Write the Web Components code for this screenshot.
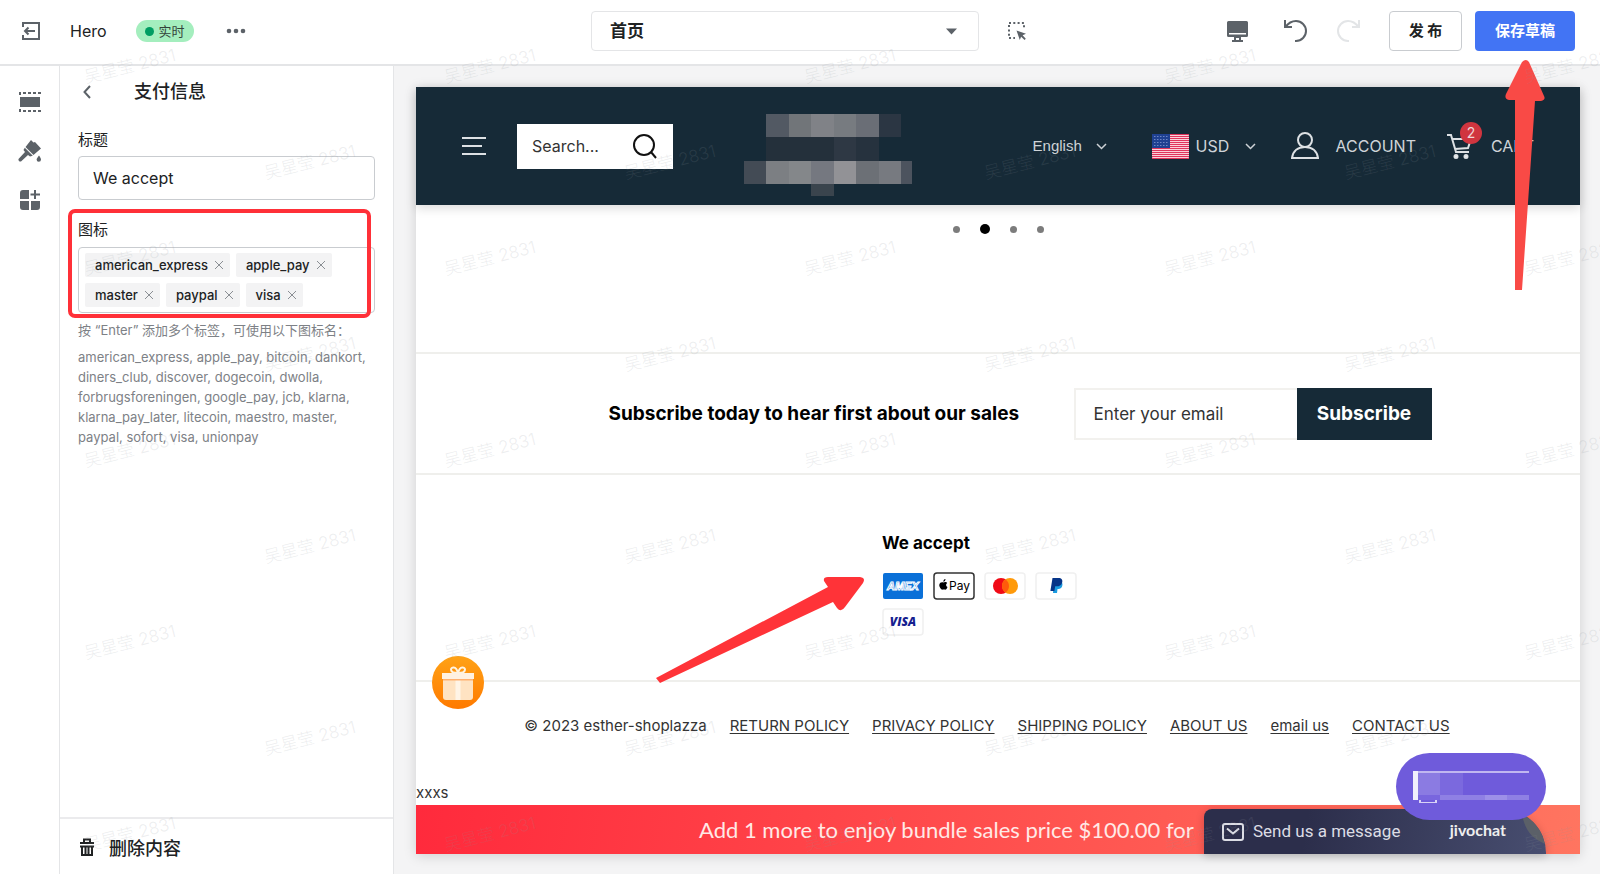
<!DOCTYPE html>
<html lang="zh-CN">
<head>
<meta charset="utf-8">
<title>Theme editor</title>
<style>
  html, body { margin: 0; }
  body {
    font-family: Inter, "Noto Sans CJK SC", sans-serif;
    color: #202223; background: #fff;
    min-height: 100vh; display: flex; flex-direction: column;
    position: relative; overflow: hidden;
  }
  main { flex: 1; display: flex; }
</style>
</head>
<body>
<editor-topbar></editor-topbar>
<main>
  <editor-rail></editor-rail>
  <settings-panel></settings-panel>
  <preview-stage>
    <store-header></store-header>
    <slide-dots></slide-dots>
    <subscribe-band></subscribe-band>
    <payment-methods></payment-methods>
    <store-footer></store-footer>
    <promo-bar></promo-bar>
  </preview-stage>
</main>
<save-arrow></save-arrow>
<water-mark></water-mark>

<script>
const base = `*,:host{box-sizing:border-box}button,input,select{font:inherit;color:inherit;margin:0;border:0;padding:0;background:none;outline:0}
button{cursor:pointer;display:flex;align-items:center;justify-content:center}svg{display:block;flex:none}select{appearance:none}`;
function define(name, css, html) {
  const t = document.createElement('template');
  t.innerHTML = `<style>${base}${css}</style>${html}`;
  customElements.define(name, class extends HTMLElement {
    constructor() {
      super();
      this.attachShadow({ mode: 'open' }).append(t.content.cloneNode(true));
    }
  });
}

/* ---------- top bar ---------- */
define('editor-topbar', `
:host{display:grid;grid-template-columns:591fr 388px 621fr;align-items:center;height:66px;padding-bottom:2px;border-bottom:2px solid #e4e5e7;background:#fff}
.left{display:flex;align-items:center;padding-left:22px}
.name{font-size:16px;line-height:24px;margin-left:30px}
.live{display:flex;align-items:center;gap:5px;height:22px;padding:0 9px;margin-left:29px;border-radius:11px;background:#a4eebe;font-size:13px;line-height:22px;color:#33443a}
.live i{width:9px;height:9px;border-radius:50%;background:#009d62}
.more{margin-left:32px}
.pick{position:relative}
select{display:block;width:100%;height:40px;border:1px solid #e4e5e7;border-radius:4px;padding:0 18px;font-size:17px;font-weight:700;background:#fff}
.pick svg{position:absolute;right:22px;top:17px;pointer-events:none}
.right{display:flex;align-items:center;padding:0 25px 0 29px}
.right .desk{margin-left:auto}
.undo{margin-left:35px}.redo{margin-left:30px}
.pub,.save{height:40px;border-radius:4px;font-size:15px;line-height:20px;font-weight:700}
.pub{width:73px;margin-left:28px;border:1px solid #c9ccd0;white-space:pre}
.save{width:100px;margin-left:13px;background:#4274f4;color:#fff}`, `
<div class="left">
  <button aria-label="Exit"><svg width="18" height="18" viewBox="0 0 18 18" fill="none" stroke="#5c6268" stroke-width="2"><path d="M1 5V1h16v16H1v-4M13 9H3M6.500 5.500 3 9l3.500 3.500"/></svg></button>
  <span class="name">Hero</span>
  <span class="live"><i></i>实时</span>
  <button class="more" aria-label="More"><svg width="20" height="6" fill="#5c6268"><circle cx="3" cy="3" r="2.300"/><circle cx="10" cy="3" r="2.300"/><circle cx="17" cy="3" r="2.300"/></svg></button>
</div>
<div class="pick"><select aria-label="Page"><option>首页</option></select><svg width="11" height="7"><path d="M0 0.500h11L5.500 6.500z" fill="#5c6268"/></svg></div>
<div class="right">
  <button aria-label="Inspect"><svg width="19" height="19" viewBox="0 0 19 19"><path d="M1 1h15v15H1z" fill="none" stroke="#5c6268" stroke-width="2" stroke-dasharray="2 2.300"/><path d="M7 7h12v12H7z" fill="#fff"/><path d="m8.500 8.500 9.500 3.300-3.400 1.400 3.200 3.600-1.200 1.200-3.500-3.300-1.300 3.300z" fill="#5c6268"/></svg></button>
  <button class="desk" aria-label="Desktop"><svg width="21" height="21" viewBox="0 0 21 21" fill="#5c6268"><path d="M1.500 0h18A1.500 1.500 0 0 1 21 1.500v13a1.500 1.500 0 0 1-1.500 1.500h-18A1.500 1.500 0 0 1 0 14.500v-13A1.500 1.500 0 0 1 1.500 0zM7 16h7v3h2v2H5v-2h2z"/><path d="M2 12h17v1.500H2z" fill="#fff"/><path d="M9 17h3v2H9z" fill="#fff"/></svg></button>
  <button class="undo" aria-label="Undo"><svg width="24" height="24" viewBox="0 0 24 24" fill="none" stroke="#5c6268" stroke-width="2"><path d="M2 1v7h7M2.500 8C5 4.500 8.500 2 13 2a10 10 0 0 1 0 20h-1"/></svg></button>
  <button class="redo" aria-label="Redo" disabled><svg width="24" height="24" viewBox="0 0 24 24" fill="none" stroke="#e3e5e7" stroke-width="2"><path d="M22 1v7h-7M21.500 8C19 4.500 15.500 2 11 2a10 10 0 0 0 0 20h1"/></svg></button>
  <button class="pub">发 布</button>
  <button class="save">保存草稿</button>
</div>`);

/* ---------- icon rail ---------- */
define('editor-rail', `
:host{display:flex;flex-direction:column;align-items:center;gap:26px;width:60px;flex:none;padding-top:25px;border-right:1px solid #e4e5e7}`, `
<button aria-label="Sections"><svg width="22" height="22" viewBox="0 0 22 22" fill="#5c6268"><path d="M1 6h20v10H1z"/><path d="M1 4V2h20v2M1 18v2h20v-2" fill="none" stroke="#5c6268" stroke-width="2" stroke-dasharray="3 2"/></svg></button>
<button aria-label="Theme"><svg width="24" height="24" viewBox="0 0 24 24" fill="#5c6268"><path d="m13 1 2.500 2.500L17 3l6 6.500-7.500 6.500L7.500 8zM6.800 8.800l8 8L12 17.500l-2-1.500-7 6.500a2 2 0 0 1-2.500-2.500L7 13l-1.500-2zM21 16.500c1.400 2 2 3 2 4a2.200 2.200 0 0 1-4.400 0c0-1 1-2 2.400-4z"/></svg></button>
<button aria-label="Apps"><svg width="22" height="22" viewBox="0 0 22 22" fill="#5c6268"><path d="M4 1h6v9H1V4a3 3 0 0 1 3-3zM1 12h9v9H4a3 3 0 0 1-3-3zM12 12h9v6a3 3 0 0 1-3 3h-6zM15 1h2v3.500h4v2h-4V10h-2V6.500h-3.500v-2H15z"/></svg></button>`);

/* ---------- settings panel ---------- */
define('tag-chip', `
:host{display:flex;align-items:center;gap:7px;height:24px;padding:0 7px 0 10px;background:#f3f3f4;border-radius:2px;font-size:13px;font-weight:500;line-height:24px}`, `
<span><slot></slot></span><button aria-label="Remove"><svg width="8" height="8" stroke="#8a8e93" fill="none"><path d="m0 0 8 8M8 0 0 8"/></svg></button>`);

define('settings-panel', `
:host{display:flex;flex-direction:column;width:334px;flex:none;border-right:1px solid #e4e5e7}
.body{flex:1;padding:10px 18px 0}
header{display:flex;align-items:center;gap:43px;height:32px;padding-left:5px}
h2{margin:0;font-size:18px;line-height:32px;font-weight:500}
label,.label{display:block;font-size:15px;line-height:24px}
.one{margin-top:20px}
.one input{display:block;width:297px;height:44px;margin-top:4px;border:1px solid #c9ccd0;border-radius:4px;padding:0 14px;font-size:16px}
.two{position:relative;margin-top:18px}
.tags{display:flex;flex-wrap:wrap;align-content:center;gap:6px;width:297px;height:66px;margin-top:5px;padding:0 6px;border:1px solid #c9ccd0;border-radius:4px}
.mark{position:absolute;left:-10px;top:-9px;width:303px;height:109px;border:4px solid #ff3038;border-radius:7px;pointer-events:none}
p{margin:0;color:#7d8186;font-size:13px;line-height:20px;white-space:nowrap}
.hint{margin-top:7px;margin-bottom:7px}
.foot{display:flex;align-items:center;height:57px;padding:0 20px;border-top:2px solid #ebebed}
.foot button{gap:15px;font-size:18px;font-weight:500}`, `
<div class="body">
  <header><button aria-label="Back"><svg width="8" height="14" fill="none" stroke="#5c6268" stroke-width="2"><path d="M7 1 1.500 7 7 13"/></svg></button><h2>支付信息</h2></header>
  <div class="one"><label for="t">标题</label><input id="t" value="We accept"></div>
  <div class="two">
    <div class="label">图标</div>
    <div class="tags"><tag-chip>american_express</tag-chip><tag-chip>apple_pay</tag-chip><tag-chip>master</tag-chip><tag-chip>paypal</tag-chip><tag-chip>visa</tag-chip></div>
    <div class="mark"></div>
  </div>
  <p class="hint">按 “Enter” 添加多个标签，可使用以下图标名：</p>
  <p>american_express, apple_pay, bitcoin, dankort,<br>diners_club, discover, dogecoin, dwolla,<br>forbrugsforeningen, google_pay, jcb, klarna,<br>klarna_pay_later, litecoin, maestro, master,<br>paypal, sofort, visa, unionpay</p>
</div>
<div class="foot"><button><svg width="14" height="18" viewBox="0 0 14 18" fill="none" stroke="#202223" stroke-width="2"><path d="M0 5h14M4 4V1.500h6V4M0 8.500h14M2 9v8h10V9M5.500 9v8M8.500 9v8" /></svg>删除内容</button></div>`);

/* ---------- preview ---------- */
define('preview-stage', `
:host{display:flex;flex:1;min-width:0;padding:21px 20px 20px 22px;background:#f4f4f5}
section{position:relative;display:flex;flex-direction:column;flex:1;min-width:0;background:#fff;box-shadow:0 2px 12px rgba(0,0,0,.15)}
.gift{position:absolute;left:16px;bottom:145px;width:52px;height:53px;border-radius:50%;background:linear-gradient(#ffa216,#ff7a00)}`, `
<section><slot></slot>
<button class="gift" aria-label="Rewards"><svg width="34" height="36" viewBox="0 0 34 36"><path d="M17 8C12 8 10 6.500 10 4.500S15 0 17 8c2-8 7-5.500 7-3.500S22 8 17 8z" fill="none" stroke="#fff3e0" stroke-width="2"/><path d="M2 15h30v17a3 3 0 0 1-3 3H5a3 3 0 0 1-3-3z" fill="#ffe3c2"/><path d="M14.500 15h5v20h-5z" fill="#fff4e6"/><path d="M1 8h32v6H1z" fill="#fff1e2"/><path d="M2 14h30v1.500H2z" fill="#ffb070"/></svg></button>
</section>`);

const chev = `<svg width="11" height="7" fill="none" stroke="#cdd2d6" stroke-width="1.500"><path d="m1 1 4.500 4.500L10 1"/></svg>`;
let stripes = '';
for (let i = 0; i < 13; i++) stripes += `<path d="M0 ${i * 2}h37v1H0z" fill="#e0345c"/>`;
let stars = '';
for (let r = 0; r < 4; r++) for (let c = 0; c < 5; c++) stars += `<path d="M${2 + c * 3} ${2 + r * 3}h1.500v1H${2 + c * 3}z" fill="#6f86c4"/>`;

define('store-header', `
:host{display:flex;align-items:center;height:118px;padding:0 46px;background:#162a37;color:#cfd4d8;font-size:16px;box-shadow:0 3px 10px rgba(0,0,0,.15)}
form{display:flex;align-items:center;width:156px;height:45px;margin-left:31px;padding:0 16px 0 15px;background:#fff;color:#222}
input{flex:1;width:0}input::placeholder{color:#333;opacity:1}
.logo{margin-left:71px;margin-top:18px}
.sel{display:flex;align-items:center}
.lang{margin-left:auto;font:15px/20px "Liberation Sans",sans-serif}
.lang select{width:63px}
.cur{margin-left:45px}.cur select{width:49px;margin-left:7px}
a{display:flex;align-items:center;color:inherit;text-decoration:none}
.acc{margin-left:35px;gap:17px}
.cart{position:relative;margin-left:31px;gap:19px}
.badge{position:absolute;left:13px;top:-11px;width:22px;height:22px;border-radius:50%;background:#d0353f;font-size:14px;line-height:22px;text-align:center;color:#f0d6d8}`, `
<button aria-label="Menu"><svg width="24" height="20" fill="#dde1e4"><path d="M0 1h24v2H0zM0 9h20v2H0zM0 17h24v2H0z"/></svg></button>
<form><input type="search" aria-label="Search" placeholder="Search..."><button type="button" aria-label="Search"><svg width="24" height="25" viewBox="0 0 24 25" fill="none" stroke="#111" stroke-width="2"><circle cx="11" cy="11" r="10"/><path d="m18 18 5 6"/></svg></button></form>
<svg class="logo" width="168" height="82" shape-rendering="crispEdges">
<path d="M22 0h23v23H22z" fill="#525963"/><path d="M45 0h22v23H45z" fill="#717579"/><path d="M67 0h23v23H67z" fill="#808287"/><path d="M90 0h22v23H90z" fill="#777b80"/><path d="M112 0h23v23h-23z" fill="#6a6e76"/><path d="M135 0h22v23h-22z" fill="#2b3643"/>
<path d="M22 23h68v24H22z" fill="#24303b"/><path d="M90 23h22v24H90z" fill="#2e3844"/><path d="M112 23h23v24h-23z" fill="#26323e"/>
<path d="M0 47h22v23H0z" fill="#434b55"/><path d="M22 47h23v23H22z" fill="#7c7f83"/><path d="M45 47h22v23H45z" fill="#84878a"/><path d="M67 47h23v23H67z" fill="#757880"/><path d="M90 47h22v23H90z" fill="#929296"/><path d="M112 47h23v23h-23z" fill="#6c7076"/><path d="M135 47h22v23h-22z" fill="#777a80"/><path d="M157 47h11v23h-11z" fill="#4c535e"/><path d="M67 70h23v12H67z" fill="#3a444d"/></svg>
<div class="sel lang"><select aria-label="Language"><option>English</option></select>${chev}</div>
<div class="sel cur"><svg width="37" height="25"><rect width="37" height="25" rx="2" fill="#fbd0d8"/>${stripes}<path d="M0 0h18v14H0z" fill="#1f4191"/>${stars}</svg><select aria-label="Currency"><option>USD</option></select>${chev}</div>
<a class="acc" href="#"><svg width="28" height="28" viewBox="0 0 28 28" fill="none" stroke="#dde1e4" stroke-width="2"><circle cx="14" cy="8" r="7"/><path d="M1 26c1-7 6-11 13-11s12 4 13 11z"/></svg>ACCOUNT</a>
<a class="cart" href="#"><svg width="25" height="26" viewBox="0 0 25 26" fill="none" stroke="#dde1e4" stroke-width="2"><path d="M0 2h4l5 17h13M5.500 6H24l-3 9-13 1"/><circle cx="9" cy="23.500" r="1.500" fill="#fff"/><circle cx="19" cy="23.500" r="1.500" fill="#fff"/></svg><span class="badge">2</span>CART</a>`);

define('slide-dots', `
:host{display:flex;justify-content:center;gap:20px;height:147px;padding-top:19px}
button{width:7px;height:10px}i{width:7px;height:7px;border-radius:50%;background:#7c7c7c}.on{width:10px}.on i{width:10px;height:10px;background:#000}`, `
<button aria-label="Slide 1"><i></i></button><button class="on" aria-label="Slide 2"><i></i></button><button aria-label="Slide 3"><i></i></button><button aria-label="Slide 4"><i></i></button>`);

define('subscribe-band', `
:host{display:flex;align-items:center;justify-content:center;height:123px;padding-left:44px;border-top:2px solid #efefec;border-bottom:2px solid #efefec;color:#000}
label{font-size:19px;font-weight:700;line-height:24px;width:465px}
form{display:flex}
input{width:223px;height:52px;padding:0 18px;border:2px solid #f2f1ee;border-right:0;font-size:17px}
input::placeholder{color:#333;opacity:1}
button{width:135px;height:52px;background:#162a37;color:#fff;font-size:19px;font-weight:700}`, `
<label for="e">Subscribe today to hear first about our sales</label>
<form><input id="e" type="email" placeholder="Enter your email"><button type="button">Subscribe</button></form>`);

define('payment-methods', `
:host{display:flex;justify-content:center;position:relative;height:207px;padding-top:56px;border-bottom:2px solid #efefec;color:#000}
.col{width:232px}
h3{margin:0;font-size:17px;line-height:24px;font-weight:700}
.cards{display:flex;flex-wrap:wrap;gap:8px 9px;margin-top:17px}
.arrow{position:absolute;left:236px;top:99px}`, `
<div class="col"><h3>We accept</h3><div class="cards">
<svg width="42" height="28" role="img"><rect x="1" y="1" width="40" height="26" rx="2" fill="#0a70d8"/><text x="21" y="18" text-anchor="middle" font-family="Liberation Sans" font-size="11" font-weight="700" font-style="italic" fill="#0a70d8" stroke="#fff" stroke-width="1">AMEX</text></svg>
<svg width="42" height="28" role="img"><rect x="1" y="1" width="40" height="26" rx="3" fill="#fff" stroke="#333" stroke-width="1.500"/><path d="M10.500 10.500c1-.8 3-.7 3.700.5-1.700 1-1.400 3.300.3 4-.6 1.700-1.600 3-2.700 2.600-.8-.3-1.200-.3-2 0C8 18 6 14.500 6.300 12.700c.4-2.500 2.600-3 4.200-2.200zM10.300 9.800c0-1.600 1-2.600 2.200-2.800.1 1.600-1 2.700-2.200 2.800z"/><text x="16" y="18" font-family="Inter" font-size="12">Pay</text></svg>
<svg width="42" height="28" role="img"><rect x="1" y="1" width="40" height="26" rx="3" fill="#fff" stroke="#f0f0f0" stroke-width="1.500"/><circle cx="17" cy="14" r="8" fill="#f00a16"/><circle cx="26" cy="14" r="8" fill="#ff9a0a"/><path d="M21.500 7.400a8 8 0 0 1 0 13.200 8 8 0 0 1 0-13.200z" fill="#ff5a0c"/></svg>
<svg width="42" height="28" role="img"><rect x="1" y="1" width="40" height="26" rx="3" fill="#fff" stroke="#f0f0f0" stroke-width="1.500"/><path d="M19 9h6c3 1 3 4.500 1.500 6.500-1 1.300-2.500 1.500-4 1.500L22 21h-4z" fill="#1a9be0"/><path d="M17.500 6h6c3 0 4.500 2 3.600 4.700-.8 2.600-2.800 3.600-5.600 3.600h-1.300l-.8 4.700h-4z" fill="#063488"/></svg>
<svg width="42" height="28" role="img"><rect x="1" y="1" width="40" height="26" rx="3" fill="#fff" stroke="#f0f0f0" stroke-width="1.500"/><text x="21" y="18" text-anchor="middle" font-family="Open Sans" font-size="12" font-weight="800" font-style="italic" fill="#15208f">VISA</text></svg>
</div></div>
<svg class="arrow" width="216" height="112" viewBox="0 0 216 112"><path d="M4 104 176 13l-4-6q-1-4 4-4h32q6 1 3 6l-18 24q-4 6-8 1l-4-6L8 109z" fill="#ff3338"/></svg>`);

define('store-footer', `
:host{display:flex;flex-direction:column;flex:1;font-size:15px;color:#333}
nav{display:flex;justify-content:center;gap:23px;padding:32px 22px 0 0;line-height:24px}
a{color:inherit;text-underline-offset:2px}
p{margin:auto 0 0;line-height:24px}`, `
<nav><span>© 2023 esther-shoplazza</span><a href="#">RETURN POLICY</a><a href="#">PRIVACY POLICY</a><a href="#">SHIPPING POLICY</a><a href="#">ABOUT US</a><a href="#">email us</a><a href="#">CONTACT US</a></nav>
<p>xxxs</p>`);

define('promo-bar', `
:host{display:flex;position:relative;height:49px;padding-left:283px;background:linear-gradient(100deg,#ff2a3c,#ff7560);color:#ffe9e6;font:22px/49px Lato,sans-serif;white-space:nowrap}
.chat{position:absolute;right:34px;bottom:0;width:342px;height:45px;padding:0 40px 0 18px;border-radius:8px 44px 0 0;background:linear-gradient(100deg,#2c2e4b 30%,#484e70);display:flex;align-items:center;gap:9px;color:#dcdde5;font:17px/45px Roboto,sans-serif;overflow:hidden;box-shadow:0 2px 8px rgba(0,0,0,.2)}
.chat b{margin-left:auto;padding-bottom:4px;font:700 16px/40px Lato,sans-serif;color:#eee}
.leaf{position:absolute;right:0;top:0}
.pill{position:absolute;right:34px;bottom:34px;width:150px;height:67px;border-radius:34px;background:#6f5bdb}`, `
<span>Add 1 more to enjoy bundle sales price $100.00 for</span>
<button class="chat"><svg class="leaf" width="26" height="45"><path d="M2 0h24v35C10 30 2 16 2 0z" fill="#5b6068"/></svg><svg width="22" height="20" fill="none" stroke="#dcdde5" stroke-width="2"><rect x="1" y="2" width="20" height="16" rx="2"/><path d="m5 6.500 6 5 6-5"/></svg><span>Send us a message</span><b>jivochat</b></button>
<button class="pill" aria-label="Chat"><svg width="116" height="32" shape-rendering="crispEdges"><path d="M5 2h22v24H5z" fill="#8b7be2"/><path d="M27 2h23v24H27z" fill="#7b69de"/><path d="M0 0h116v2H0z" fill="#c0b6f0"/><path d="M27 24h89v5H27z" fill="#8f80e4"/><path d="M72 24h22v5H72z" fill="#9d90e8"/><path d="M5 24h22v5H5z" fill="#7966de"/><path d="M0 0h5v29H0z" fill="#f1effc"/><path d="M7 29v3h16v-3" fill="none" stroke="#d8d2f6" stroke-width="1.500"/></svg></button>`);

/* ---------- annotations ---------- */
define('save-arrow', `:host{position:absolute;right:54px;top:59px;pointer-events:none}`, `
<svg width="42" height="232" viewBox="0 0 42 232"><path d="M18 3q4-4 7 0l15 34q2 4-3 5h-6L18 231h-7V41H5q-5-1-3-6z" fill="#f94a46"/></svg>`);

customElements.define('water-mark', class extends HTMLElement {
  connectedCallback() {
    const root = this.attachShadow({ mode: 'open' });
    let rows = '';
    for (let r = 0; r < 9; r++) rows += `<div class="${r % 2 ? 'odd' : ''}">${'<span>吴星莹 2831</span>'.repeat(r % 2 ? 4 : 5)}</div>`;
    root.innerHTML = `<style>
      :host{position:absolute;inset:0;overflow:hidden;pointer-events:none;color:rgba(140,148,156,.17);font:300 17px/24px Inter,"Noto Sans CJK SC",sans-serif}
      section{padding-top:18px}
      div{display:flex;height:96px;align-items:center;padding-left:40px}
      .odd{padding-left:220px}
      span{flex:none;width:180px;margin-right:180px;text-align:center;transform:rotate(-14deg)}
    </style><section aria-hidden="true">${rows}</section>`;
  }
});
</script>
</body>
</html>
